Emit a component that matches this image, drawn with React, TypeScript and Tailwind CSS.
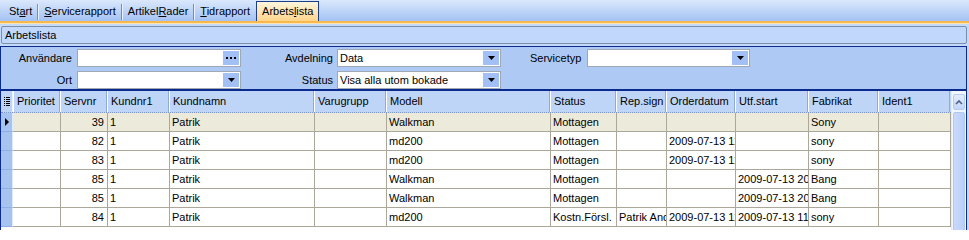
import React from "react";

const F = { fontFamily: '"Liberation Sans", Arial, sans-serif' };

type Col = { key: string; label: string; w: number; right?: boolean };
const cols: Col[] = [
  { key: "prio", label: "Prioritet", w: 47 },
  { key: "servnr", label: "Servnr", w: 47, right: true },
  { key: "kundnr", label: "Kundnr1", w: 62 },
  { key: "kundnamn", label: "Kundnamn", w: 145 },
  { key: "varugrupp", label: "Varugrupp", w: 72 },
  { key: "modell", label: "Modell", w: 164 },
  { key: "status", label: "Status", w: 66 },
  { key: "rep", label: "Rep.sign", w: 50 },
  { key: "order", label: "Orderdatum", w: 69 },
  { key: "utf", label: "Utf.start", w: 73 },
  { key: "fabrikat", label: "Fabrikat", w: 70 },
  { key: "ident", label: "Ident1", w: 72 },
];

const rows: Record<string, string>[] = [
  { servnr: "39", kundnr: "1", kundnamn: "Patrik", modell: "Walkman", status: "Mottagen", fabrikat: "Sony" },
  { servnr: "82", kundnr: "1", kundnamn: "Patrik", modell: "md200", status: "Mottagen", order: "2009-07-13 11:02", fabrikat: "sony" },
  { servnr: "83", kundnr: "1", kundnamn: "Patrik", modell: "md200", status: "Mottagen", order: "2009-07-13 11:05", fabrikat: "sony" },
  { servnr: "85", kundnr: "1", kundnamn: "Patrik", modell: "Walkman", status: "Mottagen", utf: "2009-07-13 20:00", fabrikat: "Bang" },
  { servnr: "85", kundnr: "1", kundnamn: "Patrik", modell: "Walkman", status: "Mottagen", utf: "2009-07-13 20:00", fabrikat: "Bang" },
  { servnr: "84", kundnr: "1", kundnamn: "Patrik", modell: "md200", status: "Kostn.Försl.", rep: "Patrik Andersson", order: "2009-07-13 11:10", utf: "2009-07-13 11:30", fabrikat: "sony" },
];

function Tab({ children, active }: { children: React.ReactNode; active?: boolean }) {
  if (active) {
    return (
      <div className="h-[20px] px-[5px] flex items-center border border-b-0 border-[#1c3c8c] bg-gradient-to-b from-[#fff6dc] to-[#ffd48a] text-black">
        {children}
      </div>
    );
  }
  return <div className="h-[19px] px-[5px] flex items-center text-black">{children}</div>;
}

function Sep() {
  return <div className="w-[2px] h-[16px] mb-[1px] border-l border-[#6e8ccb] bg-[#eaf2ff] self-end" />;
}

function DropBtn({ dots }: { dots?: boolean }) {
  return (
    <div className="w-[16px] h-[14px] bg-[#a2c0f5] flex items-center justify-center">
      {dots ? (
        <div className="flex gap-[2px] items-center">
          <div className="w-[2px] h-[2px] bg-black" />
          <div className="w-[2px] h-[2px] bg-black" />
          <div className="w-[2px] h-[2px] bg-black" />
        </div>
      ) : (
        <svg width="7" height="4" viewBox="0 0 7 4">
          <polygon points="0,0 7,0 3.5,4" fill="#000" />
        </svg>
      )}
    </div>
  );
}

function Field({ w, value, dots }: { w: number; value?: string; dots?: boolean }) {
  return (
    <div
      className="h-[18px] bg-white border border-[#a0a8b4] flex items-center justify-between pl-[2px] pr-[1px]"
      style={{ width: w }}
    >
      <span className="text-[11px] leading-none whitespace-nowrap">{value ?? ""}</span>
      <DropBtn dots={dots} />
    </div>
  );
}

export default function App() {
  return (
    <div className="w-[969px] h-[230px] overflow-hidden bg-[#c4daf9] text-black text-[11px]" style={F}>
      {/* tab bar */}
      <div className="h-[21px] flex items-end pl-[4px] bg-gradient-to-b from-[#dbe8fc] to-[#a3c2f3]">
        <Tab>
          <span>
            St<u>a</u>rt
          </span>
        </Tab>
        <Sep />
        <Tab>
          <span>
            <u>S</u>ervicerapport
          </span>
        </Tab>
        <Sep />
        <Tab>
          <span>
            Artikel<u>R</u>ader
          </span>
        </Tab>
        <Sep />
        <Tab>
          <span>
            <u>T</u>idrapport
          </span>
        </Tab>
        <div className="ml-[1px]">
          <Tab active>
            <span>
              Arbets<u>l</u>ista
            </span>
          </Tab>
        </div>
      </div>
      <div className="h-[2px] bg-[#f7b94e]" />
      <div className="h-[1px] bg-[#fde3b0]" />

      {/* caption */}
      <div className="mt-[2px] ml-[1px] w-[966px] h-[18px] rounded-[2px] border border-[#7d8fa8] bg-[#c1d8fc] flex items-center pl-[3px]">
        Arbetslista
      </div>

      {/* main panel */}
      <div className="mt-[2px] w-[967px] border border-[#0b2a8e] flex flex-col">
        {/* filters */}
        <div className="h-[44px] bg-[#adc9f4] border-b-2 border-[#0b2a8e] pt-[2px] flex flex-col gap-[4px]">
          <div className="flex items-center">
            <div className="w-[71px] text-right">Användare</div>
            <div className="w-[5px]" />
            <Field w={164} dots />
            <div className="w-[92px] text-right">Avdelning</div>
            <div className="w-[4px]" />
            <Field w={164} value="Data" />
            <div className="w-[29px]" />
            <div>Servicetyp</div>
            <div className="w-[6px]" />
            <Field w={163} />
          </div>
          <div className="flex items-center">
            <div className="w-[71px] text-right">Ort</div>
            <div className="w-[5px]" />
            <Field w={164} />
            <div className="w-[92px] text-right">Status</div>
            <div className="w-[4px]" />
            <Field w={164} value="Visa alla utom bokade" />
          </div>
        </div>

        {/* grid */}
        <div className="flex bg-white h-[140px]">
          <div className="flex flex-col">
            {/* header */}
            <div className="flex h-[22px] bg-[#bed5f8] border-b border-dotted border-[#7d98c8]">
              <div className="w-[12px] flex items-center justify-center border-r border-[#eaf2ff]">
                <svg width="6" height="9" viewBox="0 0 6 9">
                  <rect x="0" y="0" width="1" height="1" fill="#000" />
                  <rect x="2" y="0" width="4" height="1" fill="#000" />
                  <rect x="0" y="2" width="1" height="1" fill="#000" />
                  <rect x="2" y="2" width="4" height="1" fill="#000" />
                  <rect x="0" y="4" width="1" height="1" fill="#000" />
                  <rect x="2" y="4" width="4" height="1" fill="#000" />
                  <rect x="0" y="6" width="1" height="1" fill="#000" />
                  <rect x="2" y="6" width="4" height="1" fill="#000" />
                  <rect x="0" y="8" width="1" height="1" fill="#000" />
                  <rect x="2" y="8" width="4" height="1" fill="#000" />
                </svg>
              </div>
              {cols.map((c) => (
                <div
                  key={c.key}
                  className="flex items-center pl-[3px] border-l border-[#ffffff] shadow-[inset_-1px_0_0_#8eaad8] overflow-hidden whitespace-nowrap"
                  style={{ width: c.w }}
                >
                  {c.label}
                </div>
              ))}
            </div>
            {/* rows */}
            {rows.map((r, i) => (
              <div key={i} className={`flex h-[19px] ${i === 0 ? "bg-[#ecebdb]" : "bg-white"}`}>
                <div className="w-[12px] bg-[#a7c3f0] border-r border-[#ddeaff] border-b border-b-[#8fb0e6] flex items-center justify-center">
                  {i === 0 && (
                    <svg width="4" height="8" viewBox="0 0 4 8">
                      <polygon points="0,0 4,4 0,8" fill="#000" />
                    </svg>
                  )}
                </div>
                {cols.map((c) => (
                  <div
                    key={c.key}
                    className={`flex items-center border-r border-b border-[#aca899] overflow-hidden whitespace-nowrap ${
                      c.right ? "justify-end pr-[3px]" : "pl-[2px]"
                    }`}
                    style={{ width: c.w + (c.key === "prio" ? 1 : 0) }}
                  >
                    {r[c.key] ?? ""}
                  </div>
                ))}
              </div>
            ))}
          </div>
          {/* scrollbar */}
          <div className="flex-1 bg-[#f2f6fe] flex flex-col pt-[3px] pl-[1px] pr-[1px] gap-[2px] border-l border-[#e3ecfb]">
            <div className="h-[16px] rounded-[2px] border border-[#b5cbf2] bg-gradient-to-b from-[#e2ecfd] to-[#c3d6fa] flex items-center justify-center">
              <svg width="8" height="5" viewBox="0 0 8 5">
                <polyline points="1,4 4,1 7,4" fill="none" stroke="#4d6185" strokeWidth="1.6" />
              </svg>
            </div>
            <div className="flex-1 rounded-[2px] border border-[#b2c8f2] bg-gradient-to-r from-[#c9d9fb] to-[#b9cff8]" />
          </div>
        </div>
      </div>
    </div>
  );
}
